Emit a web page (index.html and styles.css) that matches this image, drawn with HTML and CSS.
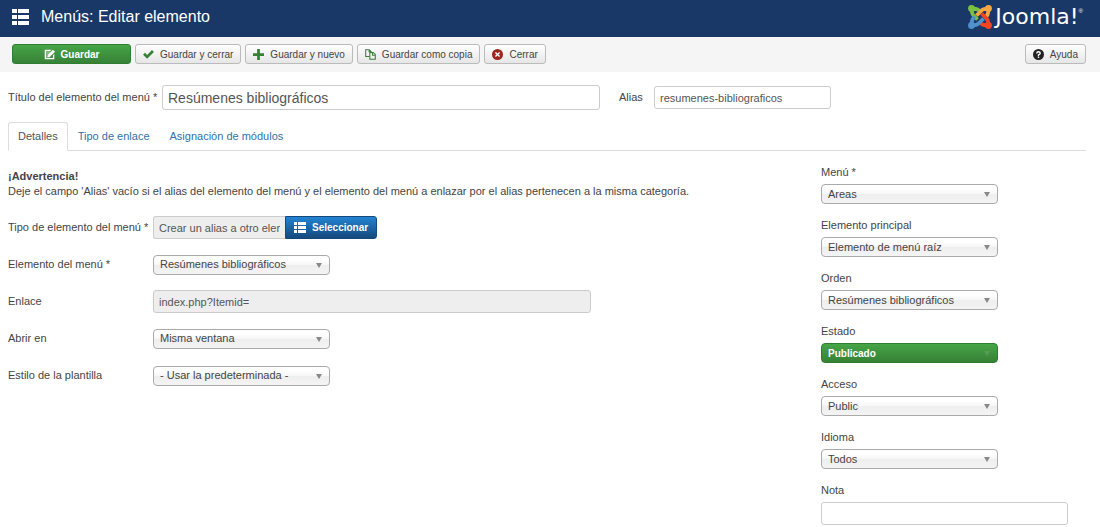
FILE: index.html
```
<!DOCTYPE html>
<html lang="es">
<head>
    <meta charset="UTF-8">
    <meta name="viewport" content="width=device-width, initial-scale=1.0">
    <title>Menús: Editar elemento</title>
    <link rel="stylesheet" href="styles.css">
</head>
<body>
    <header class="header">
        <h1 class="page-title">
            <svg class="icon-list" width="17" height="16" viewBox="0 0 17 16" fill="currentColor">
                <path d="M0 0h5v4H0zM6 0h11v4H6zM0 6h5v4H0zM6 6h11v4H6zM0 12h5v4H0zM6 12h11v4H6z"></path>
            </svg>
            Menús: Editar elemento
        </h1>
        <a class="logo" href="#">
            <svg width="24" height="24" viewBox="0 0 24 24" fill="none" stroke-width="3.8" stroke-linejoin="round">
                <path stroke="#7ac143" d="M3.500 3.500L4.200 8Q4.400 9.500 6 11L9.500 14.500M3.500 3.500L8 4Q9.800 4.200 11 5.500L12.500 7"></path>
                <path stroke="#f9a541" d="M20.500 3.500L16 4.200Q14.500 4.400 13 6L8.500 10.500M20.500 3.500L20 8Q19.800 9.800 18.500 11L17 12.500"></path>
                <path stroke="#f44321" d="M20.500 20.500L19.800 16Q19.600 14.500 18 13L13.500 8.500M20.500 20.500L16 20Q14.200 19.800 13 18.500L11.500 17"></path>
                <path stroke="#5091cd" d="M3.500 20.500L8 19.800Q9.500 19.600 11 18L15.500 13.500M3.500 20.500L4 16Q4.200 14.200 5.500 13L7 11.500"></path>
                <circle cx="3.500" cy="3.500" r="3.400" fill="#7ac143"></circle>
                <circle cx="20.500" cy="3.500" r="3.400" fill="#f9a541"></circle>
                <circle cx="20.500" cy="20.500" r="3.400" fill="#f44321"></circle>
                <circle cx="3.500" cy="20.500" r="3.400" fill="#5091cd"></circle>
            </svg>
            <span class="logo-text">Joomla!</span><span class="logo-mark">®</span>
        </a>
    </header>

    <div class="toolbar">
        <button type="button" class="btn btn-success">
            <svg width="11" height="11" viewBox="0 0 16 16" fill="currentColor">
                <path d="M2 1h9L9 3H3v10h10V9l2-2v8H1V1z"></path>
                <path d="M13 1l3 3-7 7-4 1 1-4z"></path>
                <path d="M3 3h6v10H3z" opacity=".35"></path>
            </svg>
            Guardar
        </button>
        <button type="button" class="btn">
            <svg class="green" width="11" height="11" viewBox="0 0 16 16" fill="none" stroke="currentColor" stroke-width="4">
                <path d="M1.500 7l4.500 4.500L14.500 3"></path>
            </svg>
            Guardar y cerrar
        </button>
        <button type="button" class="btn">
            <svg class="green" width="11" height="11" viewBox="0 0 16 16" fill="currentColor">
                <path d="M6 0h4v6h6v4h-6v6H6v-6H0V6h6z"></path>
            </svg>
            Guardar y nuevo
        </button>
        <button type="button" class="btn">
            <svg class="green" width="11" height="11" viewBox="0 0 16 16" fill="none" stroke="currentColor" stroke-width="1.500">
                <path d="M6 11H1V1h5l3 3v2M6 1v3h3M7 5h5l3 3v7H7zM11 5v4h4"></path>
            </svg>
            Guardar como copia
        </button>
        <button type="button" class="btn">
            <svg class="red" width="11" height="11" viewBox="0 0 16 16">
                <circle cx="8" cy="8" r="8" fill="currentColor"></circle>
                <path d="M5 5l6 6M11 5l-6 6" stroke="#fff" stroke-width="2"></path>
            </svg>
            Cerrar
        </button>
        <button type="button" class="btn btn-help">
            <svg width="11" height="11" viewBox="0 0 16 16">
                <circle cx="8" cy="8" r="8" fill="currentColor"></circle>
                <path d="M5.500 6.500Q5.500 4 8 4t2.500 2.200Q10.500 7.500 8 8.500V10M8 11v2" fill="none" stroke="#fff" stroke-width="2"></path>
            </svg>
            Ayuda
        </button>
    </div>

    <main class="content">
        <div class="title-row">
            <label class="title-label" for="title">Título del elemento del menú *</label>
            <input class="input input-title" type="text" id="title" value="Resúmenes bibliográficos">
            <label class="alias-label" for="alias">Alias</label>
            <input class="input input-alias" type="text" id="alias" value="resumenes-bibliograficos">
        </div>

        <nav class="tabs">
            <a class="tab active" href="#details">Detalles</a>
            <a class="tab" href="#link-type">Tipo de enlace</a>
            <a class="tab" href="#modules">Asignación de módulos</a>
        </nav>

        <div class="columns" id="details">
            <section class="details">
                <p class="warning">
                    <strong>¡Advertencia!</strong><br>
                    Deje el campo 'Alias' vacío si el alias del elemento del menú y el elemento del menú a enlazar por el alias pertenecen a la misma categoría.
                </p>
                <div class="control-group">
                    <label for="type">Tipo de elemento del menú *</label>
                    <div class="input-append">
                        <input class="input input-type" type="text" id="type" value="Crear un alias a otro elemento del menú" readonly>
                        <button type="button" class="btn btn-primary">
                            <svg width="12" height="11" viewBox="0 0 12 11" fill="currentColor">
                                <path d="M0 0h3v3H0zM4 0h8v3H4zM0 4h3v3H0zM4 4h8v3H4zM0 8h3v3H0zM4 8h8v3H4z"></path>
                            </svg>
                            Seleccionar
                        </button>
                    </div>
                </div>
                <div class="control-group">
                    <label for="item">Elemento del menú *</label>
                    <div class="select"><select id="item"><option>Resúmenes bibliográficos</option></select></div>
                </div>
                <div class="control-group">
                    <label for="link">Enlace</label>
                    <input class="input input-link" type="text" id="link" value="index.php?Itemid=" readonly>
                </div>
                <div class="control-group">
                    <label for="target">Abrir en</label>
                    <div class="select"><select id="target"><option>Misma ventana</option></select></div>
                </div>
                <div class="control-group">
                    <label for="template">Estilo de la plantilla</label>
                    <div class="select"><select id="template"><option>- Usar la predeterminada -</option></select></div>
                </div>
            </section>

            <aside class="sidebar">
                <div class="field">
                    <label for="menu">Menú *</label>
                    <div class="select"><select id="menu"><option>Areas</option></select></div>
                </div>
                <div class="field">
                    <label for="parent">Elemento principal</label>
                    <div class="select"><select id="parent"><option>Elemento de menú raíz</option></select></div>
                </div>
                <div class="field">
                    <label for="order">Orden</label>
                    <div class="select"><select id="order"><option>Resúmenes bibliográficos</option></select></div>
                </div>
                <div class="field">
                    <label for="state">Estado</label>
                    <div class="select select-success"><select id="state"><option>Publicado</option></select></div>
                </div>
                <div class="field">
                    <label for="access">Acceso</label>
                    <div class="select"><select id="access"><option>Public</option></select></div>
                </div>
                <div class="field">
                    <label for="language">Idioma</label>
                    <div class="select"><select id="language"><option>Todos</option></select></div>
                </div>
                <div class="field">
                    <label for="note">Nota</label>
                    <input class="input input-note" type="text" id="note">
                </div>
            </aside>
        </div>
    </main>
</body>
</html>
```
FILE: styles.css
```
* {
    box-sizing: border-box;
}

body {
    margin: 0;
    background-color: #fff;
    color: #444;
    font-family: "Liberation Sans", Arial, sans-serif;
    font-size: 11px;
    line-height: 15px;
}

input,
select,
button {
    font-family: inherit;
    font-size: 11px;
    line-height: 15px;
    margin: 0;
}

/* Header */
.header {
    display: flex;
    align-items: center;
    justify-content: space-between;
    height: 37px;
    padding: 0 17px 3px 12px;
    background-color: #1a3867;
    color: #fff;
}

.page-title {
    display: flex;
    align-items: center;
    gap: 12px;
    margin: 0;
    font-size: 16px;
    font-weight: normal;
    line-height: 20px;
}

.logo {
    display: flex;
    align-items: center;
    gap: 3px;
    color: #fff;
    text-decoration: none;
}

.logo-text {
    font-family: "DejaVu Sans", sans-serif;
    font-size: 22px;
    line-height: 24px;
}

.logo-mark {
    align-self: flex-start;
    margin-left: -3px;
    font-size: 6px;
    line-height: 12px;
}

/* Toolbar */
.toolbar {
    display: flex;
    gap: 4px;
    padding: 7px 14px 8px 12px;
    background-color: #f5f5f5;
}

.btn {
    display: inline-flex;
    align-items: center;
    justify-content: center;
    gap: 6px;
    height: 20px;
    padding: 0 7px;
    border: 1px solid #bbb;
    border-radius: 3px;
    background-image: linear-gradient(#fff, #e6e6e6);
    color: #444;
    font-size: 10px;
    cursor: pointer;
}

.btn-success {
    width: 119px;
    border-color: #2f7d32;
    background-image: linear-gradient(#46a546, #378137);
    color: #fff;
    font-weight: bold;
}

.btn-help {
    margin-left: auto;
}

.btn-help svg {
    color: #222;
}

.btn-primary {
    height: 23px;
    padding: 0 8px;
    border-color: #15497c;
    border-radius: 0 3px 3px 0;
    background-image: linear-gradient(#2384d3, #15497c);
    color: #fff;
    font-weight: bold;
}

.green {
    color: #378137;
}

.red {
    color: #9d261d;
}

/* Form controls */
.input {
    height: 23px;
    padding: 0 5px;
    border: 1px solid #ccc;
    border-radius: 3px;
    background-color: #fff;
    color: #555;
}

.input[readonly] {
    background-color: #eee;
}

.select {
    position: relative;
    width: 177px;
}

.select select {
    display: block;
    width: 100%;
    height: 20px;
    padding: 0 20px 0 6px;
    appearance: none;
    border: 1px solid #aaa;
    border-radius: 4px;
    background-color: #fff;
    background-image: linear-gradient(#fff 20%, #f6f6f6 50%, #eee 52%, #f4f4f4 100%);
    color: #444;
}

.select::after {
    content: "";
    position: absolute;
    top: 8px;
    right: 8px;
    border: 3px solid transparent;
    border-top: 5px solid #888;
    border-bottom: 0;
    pointer-events: none;
}

.select-success select {
    border-color: #2f7d32;
    background-image: linear-gradient(#46a546, #378137);
    color: #fff;
    font-size: 10px;
    font-weight: bold;
}

.select-success::after {
    border-top-color: #5a9a5a;
}

/* Title and alias */
.content {
    padding: 13px 14px 0 8px;
}

.title-row {
    display: flex;
    align-items: center;
}

.title-label {
    width: 154px;
}

.alias-label {
    width: 35px;
    margin-left: 19px;
}

.input-title {
    width: 438px;
    height: 25px;
    font-size: 14px;
}

.input-alias {
    width: 177px;
}

/* Tabs */
.tabs {
    display: flex;
    margin-top: 12px;
    border-bottom: 1px solid #ddd;
}

.tab {
    margin-bottom: -1px;
    padding: 6px 9px;
    border: 1px solid transparent;
    border-radius: 3px 3px 0 0;
    color: #3071a9;
    text-decoration: none;
}

.tab.active {
    border-color: #ddd;
    border-bottom-color: #fff;
    background-color: #fff;
    color: #555;
}

/* Columns */
.columns {
    display: grid;
    grid-template-columns: 3fr 1fr;
    gap: 18px;
    padding-top: 14px;
}

.warning {
    margin: 4px 0 17px;
}

.control-group {
    display: flex;
    align-items: center;
    height: 23px;
    margin-bottom: 14px;
}

.control-group label {
    width: 145px;
}

.input-append {
    display: flex;
}

.input-type {
    width: 132px;
    border-right: 0;
    border-radius: 3px 0 0 3px;
}

.input-link {
    width: 438px;
}

.field {
    margin-bottom: 14px;
}

.field label {
    display: block;
    margin-bottom: 4px;
}

.input-note {
    width: 247px;
}
```
